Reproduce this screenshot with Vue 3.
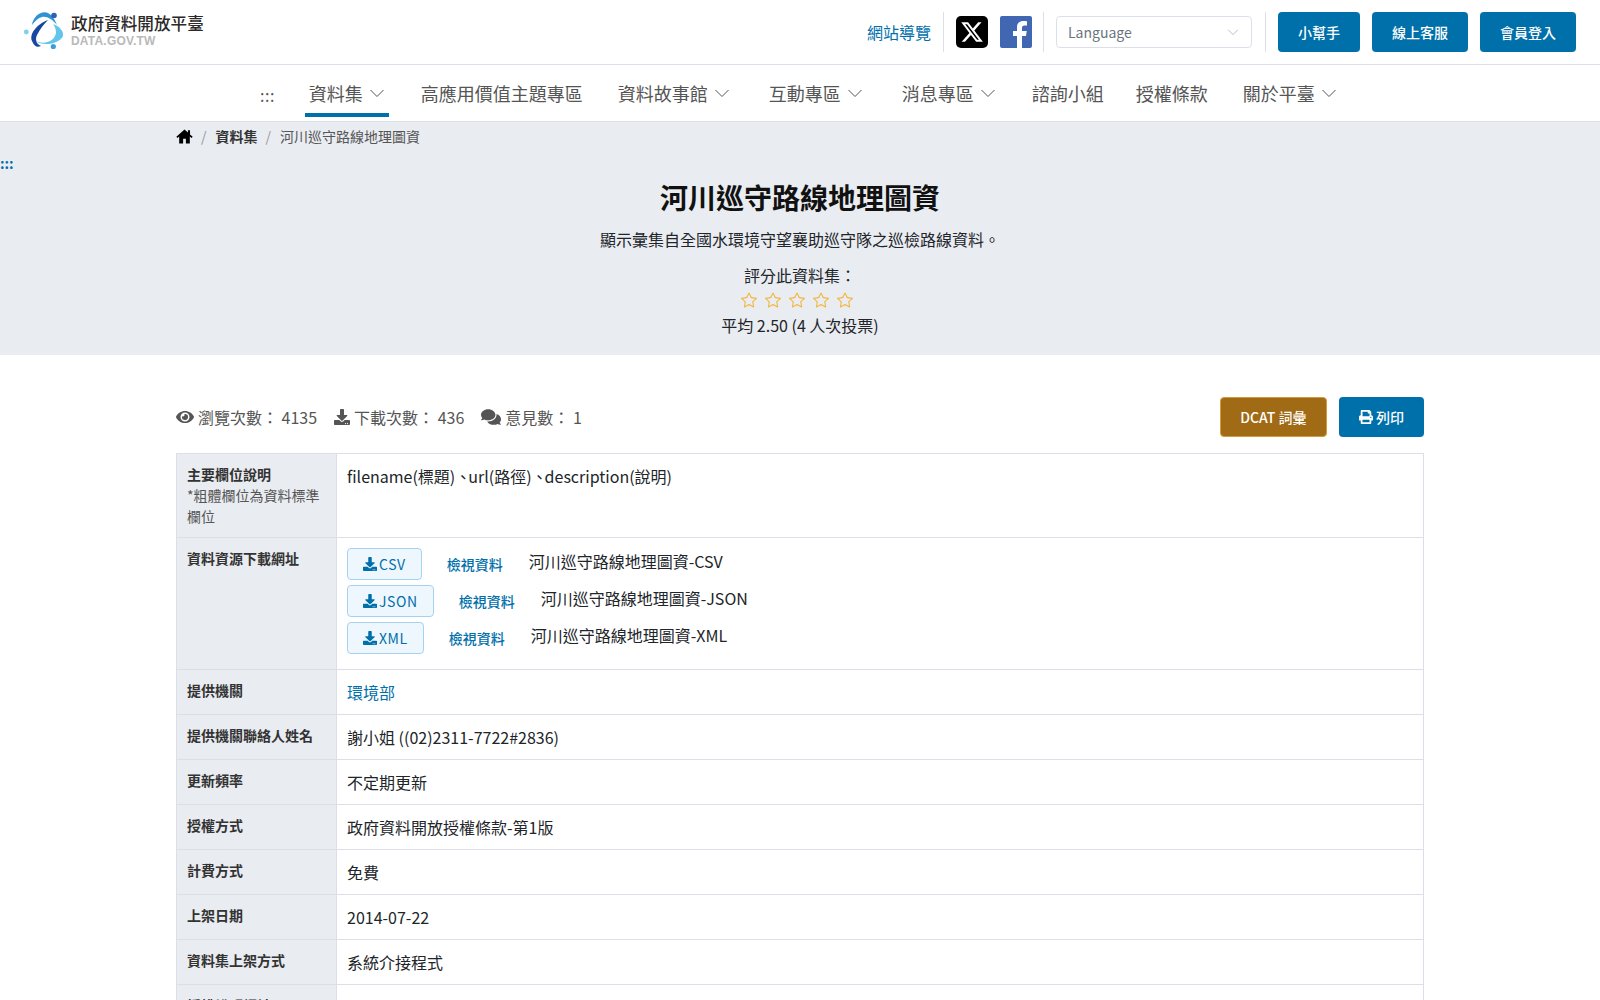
<script setup>
const navItems = [
  { label: '資料集', menu: true, active: true, cls: 'mid' },
  { label: '高應用價值主題專區' },
  { label: '資料故事館', menu: true, cls: 'wide' },
  { label: '互動專區', menu: true, cls: 'wide' },
  { label: '消息專區', menu: true, cls: 'mid' },
  { label: '諮詢小組', cls: 'tight' },
  { label: '授權條款' },
  { label: '關於平臺', menu: true }
]

const stars = [1, 2, 3, 4, 5]

const downloads = [
  { format: 'CSV', title: '河川巡守路線地理圖資-CSV' },
  { format: 'JSON', title: '河川巡守路線地理圖資-JSON' },
  { format: 'XML', title: '河川巡守路線地理圖資-XML' }
]

const rows = [
  { label: '提供機關', value: '環境部', link: true },
  { label: '提供機關聯絡人姓名', value: '謝小姐 ((02)2311-7722#2836)' },
  { label: '更新頻率', value: '不定期更新' },
  { label: '授權方式', value: '政府資料開放授權條款-第1版' },
  { label: '計費方式', value: '免費' },
  { label: '上架日期', value: '2014-07-22' },
  { label: '資料集上架方式', value: '系統介接程式' },
  { label: '授權說明網址', value: '' }
]

const downloadPath = 'M216 0h80c13.3 0 24 10.7 24 24v168h87.7c17.8 0 26.7 21.5 14.1 34.1L269.7 378.3c-7.5 7.5-19.8 7.5-27.3 0L90.1 226.1c-12.6-12.6-3.7-34.1 14.1-34.1H192V24c0-13.3 10.7-24 24-24zm296 376v112c0 13.3-10.7 24-24 24H24c-13.3 0-24-10.7-24-24V376c0-13.3 10.7-24 24-24h146.7l49 49c20.1 20.1 52.5 20.1 72.6 0l49-49H488c13.3 0 24 10.7 24 24zm-124 88c0-11-9-20-20-20s-20 9-20 20 9 20 20 20 20-9 20-20zm64 0c0-11-9-20-20-20s-20 9-20 20 9 20 20 20 20-9 20-20z'
</script>

<template>
  <div class="page">
    <header class="topbar">
      <a class="brand">
        <svg class="brand-logo" viewBox="0 0 50 48" aria-hidden="true">
          <path d="M14 32C22 37 34 35 36 25C36 21 35 19 33 16C39 18 44 23 43 28C40 35 24 40 14 32Z" fill="#62c6ea" />
          <path d="M12 17C13 8 22 2 28 5C32 7 35 12 37 17C32 11 27 8 22 9C18 10 15 13 12 17Z" fill="#2f92d6" />
          <path d="M28 12C17 16 9 26 12 33C14 38 17 40 21 38C16 36 15 31 17 27C20 21 24 16 28 12Z" fill="#17479e" />
          <circle cx="34" cy="7.5" r="2.8" fill="#2a62b4" />
          <circle cx="6.3" cy="24" r="2.4" fill="#7fd0ee" />
          <circle cx="33.3" cy="38.5" r="2.6" fill="#3f9bdc" />
        </svg>
        <span class="brand-text">
          <strong>政府資料開放平臺</strong>
          <small>DATA.GOV.TW</small>
        </span>
      </a>
      <div class="top-actions">
        <a class="sitemap">網站導覽</a>
        <i class="divider"></i>
        <a class="social">
          <svg viewBox="0 0 32 32" aria-hidden="true">
            <rect width="32" height="32" rx="5" fill="#000" />
            <path transform="translate(4 4)" d="M18.244 2.25h3.308l-7.227 8.26 8.502 11.24H16.17l-5.214-6.817L4.99 21.75H1.68l7.73-8.835L1.254 2.25H8.08l4.713 6.231zm-1.161 17.52h1.833L7.084 4.126H5.117z" fill="#fff" />
          </svg>
        </a>
        <a class="social fb">
          <svg viewBox="0 0 32 32" aria-hidden="true">
            <rect width="32" height="32" rx="2" fill="#4267b2" />
            <path d="M22 32V20h4l.7-5H22v-3c0-1.4.6-2.4 2.5-2.4H27V5.2C26.4 5.1 24.9 5 23.2 5 19.6 5 17 7.2 17 11.3V15h-4v5h4v12z" fill="#fff" />
          </svg>
        </a>
        <i class="divider"></i>
        <div class="lang">
          <span>Language</span>
          <svg class="chev small" viewBox="0 0 16 16" aria-hidden="true"><path d="M2.5 5.5L8 11l5.5-5.5" /></svg>
        </div>
        <i class="divider"></i>
        <a class="btn">小幫手</a>
        <a class="btn">線上客服</a>
        <a class="btn">會員登入</a>
      </div>
    </header>

    <nav class="mainnav">
      <a class="dots">:::</a>
      <a
        v-for="item in navItems"
        :key="item.label"
        class="nav-item"
        :class="[item.cls, { active: item.active }]"
      >
        {{ item.label }}
        <svg v-if="item.menu" class="chev" viewBox="0 0 16 16" aria-hidden="true"><path d="M1.5 5L8 11.5 14.5 5" /></svg>
      </a>
    </nav>

    <section class="hero">
      <div class="crumbs">
        <svg class="home" viewBox="0 0 16 16" aria-hidden="true">
          <path d="M8 1.5L.3 8.2l1.1 1.2L3 8v6.5h3.7V10h2.6v4.5H13V8l1.6 1.4 1.1-1.2L13.2 6V2.2h-2v2L8 1.5z" />
        </svg>
        <span class="sep">/</span>
        <b>資料集</b>
        <span class="sep">/</span>
        <span class="current">河川巡守路線地理圖資</span>
      </div>
      <a class="anchor">:::</a>
      <h1>河川巡守路線地理圖資</h1>
      <p class="desc">顯示彙集自全國水環境守望襄助巡守隊之巡檢路線資料。</p>
      <p class="rate-label">評分此資料集：</p>
      <div class="stars">
        <svg v-for="n in stars" :key="n" viewBox="0 0 16 16" aria-hidden="true">
          <path d="M2.866 14.85c-.078.444.36.791.746.593l4.39-2.256 4.389 2.256c.386.198.824-.149.746-.592l-.83-4.73 3.522-3.356c.33-.314.16-.888-.282-.95l-4.898-.696L8.465.792a.513.513 0 0 0-.927 0L5.354 5.12l-4.898.696c-.441.062-.612.636-.283.95l3.523 3.356-.83 4.73zm4.905-2.767-3.686 1.894.694-3.957a.565.565 0 0 0-.163-.505L1.71 6.745l4.052-.576a.525.525 0 0 0 .393-.288L8 2.223l1.847 3.658a.525.525 0 0 0 .393.288l4.052.575-2.906 2.77a.565.565 0 0 0-.163.506l.694 3.957-3.686-1.894a.503.503 0 0 0-.461 0z" />
        </svg>
      </div>
      <p class="rate-avg">平均 2.50 (4 人次投票)</p>
    </section>

    <main class="content">
      <div class="stats-row">
        <div class="stats">
          <span class="stat">
            <svg class="eye" viewBox="0 0 576 512" aria-hidden="true">
              <path d="M572.52 241.4C518.29 135.59 410.93 64 288 64S57.68 135.64 3.48 241.41a32.35 32.35 0 0 0 0 29.19C57.71 376.41 165.07 448 288 448s230.32-71.64 284.52-177.41a32.35 32.35 0 0 0 0-29.19zM288 400a144 144 0 1 1 144-144 143.93 143.93 0 0 1-144 144zm0-240a95.31 95.31 0 0 0-25.31 3.79 47.85 47.85 0 0 1-66.9 66.9A95.78 95.78 0 1 0 288 160z" />
            </svg>
            瀏覽次數： 4135
          </span>
          <span class="stat">
            <svg class="dl" viewBox="0 0 512 512" aria-hidden="true"><path :d="downloadPath" /></svg>
            下載次數： 436
          </span>
          <span class="stat">
            <svg class="talk" viewBox="0 0 576 512" aria-hidden="true">
              <path d="M416 192c0-88.4-93.1-160-208-160S0 103.6 0 192c0 34.3 14.1 65.9 38 92-13.4 30.2-35.5 54.2-35.8 54.5-2.2 2.3-2.8 5.7-1.5 8.7S4.8 352 8 352c36.6 0 66.9-12.3 88.7-25 32.2 15.7 70.3 25 111.3 25 114.9 0 208-71.6 208-160zm122 220c23.9-26 38-57.7 38-92 0-66.9-53.5-124.2-129.3-148.1.9 6.6 1.3 13.3 1.3 20.1 0 105.9-107.7 192-240 192-10.8 0-21.3-.8-31.7-1.9C207.8 439.6 281.8 480 368 480c41 0 79.1-9.2 111.3-25 21.8 12.7 52.1 25 88.7 25 3.2 0 6.1-1.9 7.3-4.8 1.3-2.9.7-6.3-1.5-8.7-.3-.3-22.4-24.2-35.8-54.5z" />
            </svg>
            意見數： 1
          </span>
        </div>
        <div class="stat-actions">
          <a class="btn dcat">DCAT 詞彙</a>
          <a class="btn print">
            <svg viewBox="0 0 512 512" aria-hidden="true">
              <path d="M448 192V77.25c0-8.49-3.37-16.62-9.37-22.63L393.37 9.37c-6-6-14.14-9.37-22.63-9.37H96C78.33 0 64 14.33 64 32v160c-35.35 0-64 28.65-64 64v112c0 8.84 7.16 16 16 16h48v96c0 17.67 14.33 32 32 32h320c17.67 0 32-14.33 32-32v-96h48c8.84 0 16-7.16 16-16V256c0-35.35-28.65-64-64-64zm-64 256H128v-96h256v96zm0-224H128V64h192v48c0 8.84 7.16 16 16 16h48v96zm48 72c-13.25 0-24-10.75-24-24 0-13.26 10.75-24 24-24s24 10.74 24 24c0 13.25-10.75 24-24 24z" />
            </svg>
            列印
          </a>
        </div>
      </div>

      <table class="info">
        <tbody>
          <tr>
            <th>主要欄位說明<span class="note">*粗體欄位為資料標準欄位</span></th>
            <td>filename(標題)<span class="punct">、</span>url(路徑)<span class="punct">、</span>description(說明)</td>
          </tr>
          <tr>
            <th>資料資源下載網址</th>
            <td class="files">
              <div v-for="file in downloads" :key="file.format" class="file-row">
                <a class="file-btn">
                  <svg viewBox="0 0 512 512" aria-hidden="true"><path :d="downloadPath" /></svg>
                  {{ file.format }}
                </a>
                <a class="view">檢視資料</a>
                <span class="file-name">{{ file.title }}</span>
              </div>
            </td>
          </tr>
          <tr v-for="row in rows" :key="row.label">
            <th>{{ row.label }}</th>
            <td>
              <a v-if="row.link" class="link">{{ row.value }}</a>
              <template v-else>{{ row.value }}</template>
            </td>
          </tr>
        </tbody>
      </table>
    </main>
  </div>
</template>

<style>
html,
body {
  margin: 0;
  overflow: hidden;
  background: #fff;
}
</style>

<style scoped>
.page {
  height: 1000px;
  overflow: hidden;
  font-family: "Noto Sans CJK TC", "Noto Sans", sans-serif;
  font-size: 16px;
  line-height: 24px;
  color: #212529;
}

.topbar {
  height: 64px;
  border-bottom: 1px solid #dcdfe8;
  padding: 0 24px 0 20px;
  display: flex;
  align-items: center;
  justify-content: space-between;
}

.brand {
  display: flex;
  align-items: center;
  gap: 1px;
}

.brand-logo {
  width: 50px;
  height: 48px;
}

.brand-text {
  display: flex;
  flex-direction: column;
  padding-bottom: 2px;
}

.brand-text strong {
  font-size: 16.6px;
  line-height: 20px;
  font-weight: 500;
  color: #2c2a29;
}

.brand-text small {
  font-family: "Liberation Sans", sans-serif;
  font-size: 12px;
  line-height: 15px;
  margin-top: 1px;
  font-weight: 700;
  color: #b9b9b9;
  letter-spacing: 0.2px;
}

.top-actions {
  display: flex;
  align-items: center;
}

.sitemap {
  color: #0070ab;
  margin-right: 12px;
}

.divider {
  width: 1px;
  height: 40px;
  background: #dcdfe8;
}

.social {
  width: 32px;
  height: 32px;
  margin-left: 12px;
}

.social.fb {
  margin: 0 11px 0 12px;
}

.social svg {
  display: block;
  width: 32px;
  height: 32px;
}

.lang {
  width: 196px;
  height: 32px;
  margin: 0 13px 0 12px;
  border: 1px solid #dcdfe8;
  border-radius: 4px;
  box-sizing: border-box;
  padding: 0 11px;
  display: flex;
  align-items: center;
  justify-content: space-between;
  font-size: 14px;
  color: #6c757d;
}

.btn {
  height: 40px;
  padding: 0 20px;
  box-sizing: border-box;
  border-radius: 4px;
  background: #0070ab;
  color: #fff;
  font-size: 14px;
  font-weight: 500;
  display: inline-flex;
  align-items: center;
  margin-left: 12px;
}

.chev {
  width: 16px;
  height: 16px;
  margin-left: 2px;
  fill: none;
  stroke: #555;
  stroke-width: 1;
}

.chev.small {
  width: 14px;
  height: 14px;
  stroke: #adb5bd;
}

.mainnav {
  height: 56px;
  padding-left: 260px;
  border-bottom: 1px solid #dcdfe8;
  display: flex;
  align-items: stretch;
  font-size: 18px;
  color: #555;
}

.dots {
  font-size: 16px;
  line-height: 60px;
  margin-right: 30px;
  letter-spacing: 0.5px;
}

.nav-item {
  display: flex;
  align-items: center;
  gap: 4px;
  padding: 4px 4px 0;
  margin-right: 27px;
  height: 52px;
  box-sizing: border-box;
}

.nav-item.mid {
  margin-right: 28px;
}

.nav-item.wide {
  margin-right: 31px;
}

.nav-item.tight {
  margin-right: 24px;
}

.nav-item.active {
  border-bottom: 4px solid #0070ab;
  padding-top: 8px;
}

.hero {
  background: #e9ecf1;
  height: 233px;
  text-align: center;
  overflow: hidden;
}

.crumbs {
  width: 1248px;
  margin: 0 auto;
  padding-top: 4px;
  display: flex;
  align-items: center;
  font-size: 14px;
  line-height: 21px;
  color: #555;
}

.crumbs b {
  font-weight: 700;
  color: #333;
}

.home {
  width: 17px;
  height: 17px;
  fill: #000;
}

.sep {
  color: #999;
  padding: 0 9px 0 8px;
}

.anchor {
  display: block;
  text-align: left;
  font-size: 14px;
  font-weight: 700;
  line-height: 21px;
  margin-top: 6px;
  color: #0070ab;
}

.hero h1 {
  margin: 2px 0 0;
  font-size: 28px;
  line-height: 42px;
  font-weight: 700;
  color: #111;
}

.hero p {
  margin: 0;
}

.desc {
  padding-top: 9px;
}

.rate-label {
  padding-top: 12px;
}

.stars {
  display: flex;
  justify-content: center;
  gap: 8px;
  height: 26px;
  align-items: center;
  padding-right: 6px;
}

.stars svg {
  width: 16px;
  height: 16px;
  fill: #f3b63c;
}

.content {
  width: 1248px;
  margin: 0 auto;
}

.stats-row {
  display: flex;
  justify-content: space-between;
  align-items: center;
  padding-top: 42px;
  height: 98px;
  box-sizing: border-box;
  padding-bottom: 16px;
}

.stats {
  display: flex;
  gap: 17px;
  color: #555;
}

.stat {
  display: flex;
  align-items: center;
  gap: 4px;
}

.stat svg {
  fill: #555;
}

.eye {
  width: 18px;
  height: 16px;
}

.dl {
  width: 16px;
  height: 16px;
}

.talk {
  width: 20px;
  height: 18px;
}

.stat-actions {
  display: flex;
}

.dcat {
  padding: 0 19.5px;
  background: #a16a14;
  border: 1px solid #d39a3c;
}

.print {
  gap: 3px;
}

.print svg {
  width: 14px;
  height: 14px;
  fill: #fff;
}

.info {
  width: 100%;
  border-collapse: collapse;
  table-layout: fixed;
}

.info th,
.info td {
  border: 1px solid #dcdfe8;
  padding: 10px;
  text-align: left;
  vertical-align: top;
}

.info th {
  width: 139px;
  background: #e9ecf1;
  font-size: 14px;
  line-height: 21px;
  font-weight: 700;
  color: #333;
}

.note {
  display: block;
  font-weight: 400;
  color: #555;
}

.punct {
  letter-spacing: -3px;
}

.info td.files {
  padding: 10px 10px 5px;
}

.file-row {
  display: flex;
  height: 32px;
  margin-bottom: 5px;
}

.file-row:last-child {
  margin-bottom: 10px;
}

.file-btn {
  height: 32px;
  box-sizing: border-box;
  padding: 0 15px;
  border: 1px solid #a6d2f2;
  border-radius: 4px;
  background: #eff7fe;
  color: #0070ab;
  font-size: 14px;
  display: inline-flex;
  align-items: center;
  gap: 2px;
  letter-spacing: 0.6px;
}

.file-btn svg {
  width: 14px;
  height: 14px;
  fill: #0070ab;
}

.view {
  margin-left: 25px;
  font-size: 14px;
  font-weight: 500;
  color: #0070ab;
  line-height: 21px;
  padding-top: 6px;
}

.file-name {
  margin-left: 26px;
  line-height: 24px;
  padding-top: 1px;
}

.link {
  color: #0070ab;
}
</style>
